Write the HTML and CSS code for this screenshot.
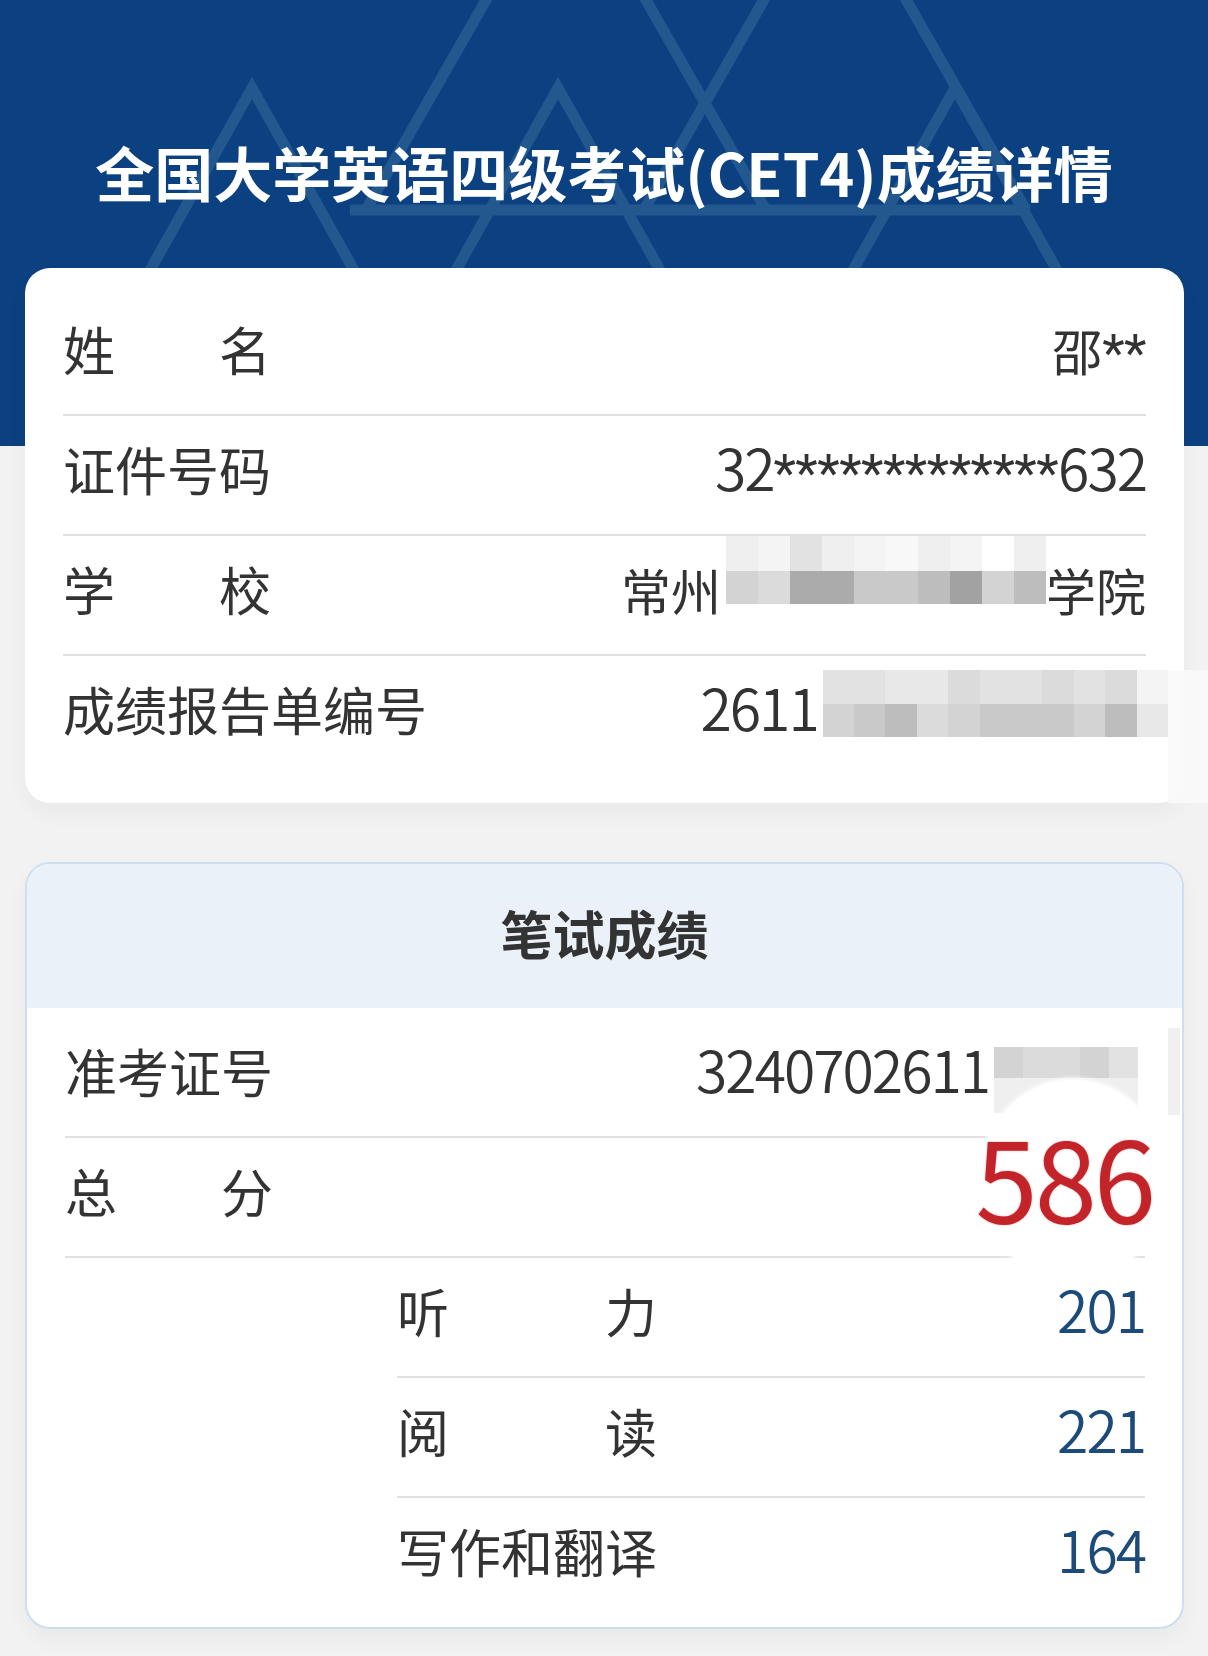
FILE: index.html
```html
<!DOCTYPE html>
<html lang="zh-CN">
<head>
<meta charset="utf-8">
<title>全国大学英语四级考试(CET4)成绩详情</title>
<link rel="stylesheet" href="styles.css">
</head>
<body>
<div class="page">
  <header class="hero">
    <svg class="hero-bg" width="1208" height="268" viewBox="0 0 1208 268" aria-hidden="true">
      <g fill="none" stroke="#23588f" stroke-width="11" stroke-linejoin="miter">
        <polyline points="149,272 252,88 355,272"/>
        <polyline points="455,272 558,88 661,272"/>
        <polyline points="852,272 955,88 1058,272"/>
        <polyline points="366,210 566,-140 766,210"/>
        <polyline points="644,210 835,-125 1026,210"/>
        <line x1="350" y1="210" x2="1030" y2="210"/>
      </g>
    </svg>
    <h1 class="hero-title">全国大学英语四级考试(CET4)成绩详情</h1>
  </header>

  <section class="card info">
    <div class="row">
      <div class="label"><span>姓</span><span>名</span></div>
      <div class="value"><span class="cjk">邵</span><span class="ast">**</span></div>
    </div>
    <div class="row">
      <div class="label"><span>证件号码</span></div>
      <div class="value">32<span class="ast">*************</span>632</div>
    </div>
    <div class="row">
      <div class="label"><span>学</span><span>校</span></div>
      <div class="value"><span class="cjk">常州</span><span class="mosaic m-school"><span class="mrow r1"><i class="g2"></i><i class="g1"></i><i class="g4"></i><i class="g2"></i><i class="g1"></i><i class="g0"></i><i class="g2"></i><i class="g1"></i><i class="w"></i><i class="g2"></i></span><span class="mrow r2"><i class="g6"></i><i class="g5"></i><i class="g9"></i><i class="g9"></i><i class="g7"></i><i class="g7"></i><i class="g8"></i><i class="g10"></i><i class="g6"></i><i class="g8"></i></span></span><span class="cjk">学院</span></div>
    </div>
    <div class="row row-last">
      <div class="label"><span>成绩报告单编号</span></div>
      <div class="value">2611<span class="mosaic m-report"><span class="mrow r1"><i class="g4"></i><i class="g4"></i><i class="g3"></i><i class="g3"></i><i class="g5"></i><i class="g4"></i><i class="g4"></i><i class="g5"></i><i class="g4"></i><i class="g5"></i><i class="g1"></i></span><span class="mrow r2"><i class="g6"></i><i class="g7"></i><i class="g8"></i><i class="g5"></i><i class="g6"></i><i class="g7"></i><i class="g7"></i><i class="g7"></i><i class="g6"></i><i class="g8"></i><i class="g3"></i></span></span></div>
    </div>
    <div class="haze"></div>
  </section>

  <section class="card score">
    <div class="score-head">笔试成绩</div>
    <div class="score-body">
      <div class="row">
        <div class="label"><span>准考证号</span></div>
        <div class="value">3240702611<span class="mosaic m-ticket"><span class="mrow r1"><i class="g6"></i><i class="g5"></i><i class="g5"></i><i class="g6"></i><i class="g4"></i></span><span class="mrow r2"><i class="g2"></i><i class="g2"></i><i class="g2"></i><i class="g2"></i><i class="g2"></i></span></span></div>
      </div>
      <div class="row">
        <div class="label"><span>总</span><span>分</span></div>
        <div class="value"><span class="total-num">586</span></div>
      </div>
      <div class="subs">
        <div class="row sub">
          <div class="label sub-label"><span>听</span><span>力</span></div>
          <div class="value blue">201</div>
        </div>
        <div class="row sub">
          <div class="label sub-label"><span>阅</span><span>读</span></div>
          <div class="value blue">221</div>
        </div>
        <div class="row sub row-last">
          <div class="label sub-label"><span>写作和翻译</span></div>
          <div class="value blue">164</div>
        </div>
      </div>
    </div>
    <div class="blob"></div>
    <div class="strip"></div>
  </section>
</div>
</body>
</html>
```

FILE: styles.css
```css
* {
  box-sizing: border-box;
  margin: 0;
  padding: 0;
}

html, body {
  background: #f2f2f2;
}

body {
  width: 1208px;
  font-family: "Noto Sans CJK SC", "Noto Sans", sans-serif;
  color: #333333;
}

.page {
  min-height: 1656px;
  background: linear-gradient(#0c4181 0, #0c4181 446px, #f2f2f2 446px);
  padding-bottom: 27px;
  overflow: hidden;
}

/* ---------- header ---------- */
.hero {
  position: relative;
  height: 268px;
}

.hero-bg {
  position: absolute;
  left: 0;
  top: 0;
  display: block;
}

.hero-title {
  position: relative;
  padding-top: 142px;
  text-align: center;
  font-size: 59px;
  line-height: 1;
  font-weight: 700;
  color: #ffffff;
  white-space: nowrap;
}

/* ---------- cards ---------- */
.card {
  margin: 0 24px 0 25px;
  background: #ffffff;
  border-radius: 25px;
}

.info {
  position: relative;
  padding: 28px 38px 27px;
  box-shadow: 0 10px 22px rgba(0, 0, 0, 0.04);
}

.row {
  display: flex;
  align-items: baseline;
  justify-content: space-between;
  height: 120px;
  padding-top: 22px;
  border-bottom: 2px solid #e1e1e1;
}

.row.row-last {
  border-bottom: none;
}

.label {
  display: flex;
  justify-content: space-between;
  min-width: 208px;
  font-size: 52px;
  line-height: 1;
  color: #333333;
  white-space: nowrap;
}

.value {
  font-size: 57px;
  font-weight: 350;
  letter-spacing: -2px;
  line-height: 1;
  color: #333333;
  white-space: nowrap;
  text-align: right;
}

.cjk {
  font-size: 50px;
  font-weight: 400;
  letter-spacing: 0;
}

.ast {
  font-family: Roboto, "Noto Sans", sans-serif;
  font-size: 52px;
  font-weight: 400;
  letter-spacing: -0.5px;
}

.blue {
  color: #1c4a79;
}

/* ---------- mosaic redaction ---------- */
.mosaic {
  display: inline-block;
  margin-top: -60px;
}

.mrow {
  display: flex;
}

.mosaic i {
  display: block;
}

.m-school {
  margin-left: 5px;
  vertical-align: 7px;
}
.m-school i { width: 32px; }
.m-school .r1 i { height: 35px; }
.m-school .r2 i { height: 33px; }

.m-report {
  margin-left: 5px;
  margin-right: -22px;
  vertical-align: -6px;
}
.m-report i { width: 31.4px; }
.m-report .r1 i { height: 34px; }
.m-report .r2 i { height: 33px; }

.m-ticket {
  margin-left: 5px;
  margin-right: 7px;
  vertical-align: -20px;
}
.m-ticket i { width: 28.8px; }
.m-ticket .r1 i { height: 31px; }
.m-ticket .r2 i { height: 35px; }

.w   { background: #ffffff; }
.g0  { background: #f8f8f8; }
.g1  { background: #f4f4f4; }
.g2  { background: #efefef; }
.g3  { background: #e8e8e8; }
.g4  { background: #e2e2e2; }
.g5  { background: #dbdbdb; }
.g6  { background: #d3d3d3; }
.g7  { background: #c9c9c9; }
.g8  { background: #bdbdbd; }
.g9  { background: #ababab; }
.g10 { background: #a2a2a2; }

.haze {
  position: absolute;
  left: 1143px;
  top: 402px;
  width: 40px;
  height: 133px;
  background: rgba(250, 250, 250, 0.9);
}

/* ---------- score card ---------- */
.score {
  position: relative;
  margin-top: 59px;
  border: 2px solid #cfdeee;
  overflow: hidden;
  box-shadow: 0 10px 22px rgba(0, 0, 0, 0.04);
}

.score-head {
  display: flex;
  align-items: center;
  justify-content: center;
  height: 144px;
  padding-bottom: 6px;
  background: #ebf1f8;
  font-size: 52px;
  line-height: 1;
  font-weight: 700;
  color: #333333;
}

.score-body {
  padding: 10px 37px 9px 38px;
}

.subs {
  margin-left: 332px;
}

.sub-label {
  min-width: 260px;
}

.total-num {
  position: relative;
  z-index: 2;
  font-size: 112px;
  font-weight: 400;
  line-height: 0;
  letter-spacing: -3px;
  vertical-align: -11px;
  margin-right: -8px;
  color: #c2242a;
  text-shadow: 0 0 2px rgba(200, 30, 30, 0.45);
}

.blob {
  position: absolute;
  z-index: 1;
  left: 953px;
  top: 216px;
  width: 186px;
  height: 200px;
  border-radius: 50%;
  background: #ffffff;
  box-shadow: 0 0 4px 2px #ffffff;
}

.strip {
  position: absolute;
  left: 1141px;
  top: 164px;
  width: 12px;
  height: 87px;
  background: #f0f0f0;
}
```
